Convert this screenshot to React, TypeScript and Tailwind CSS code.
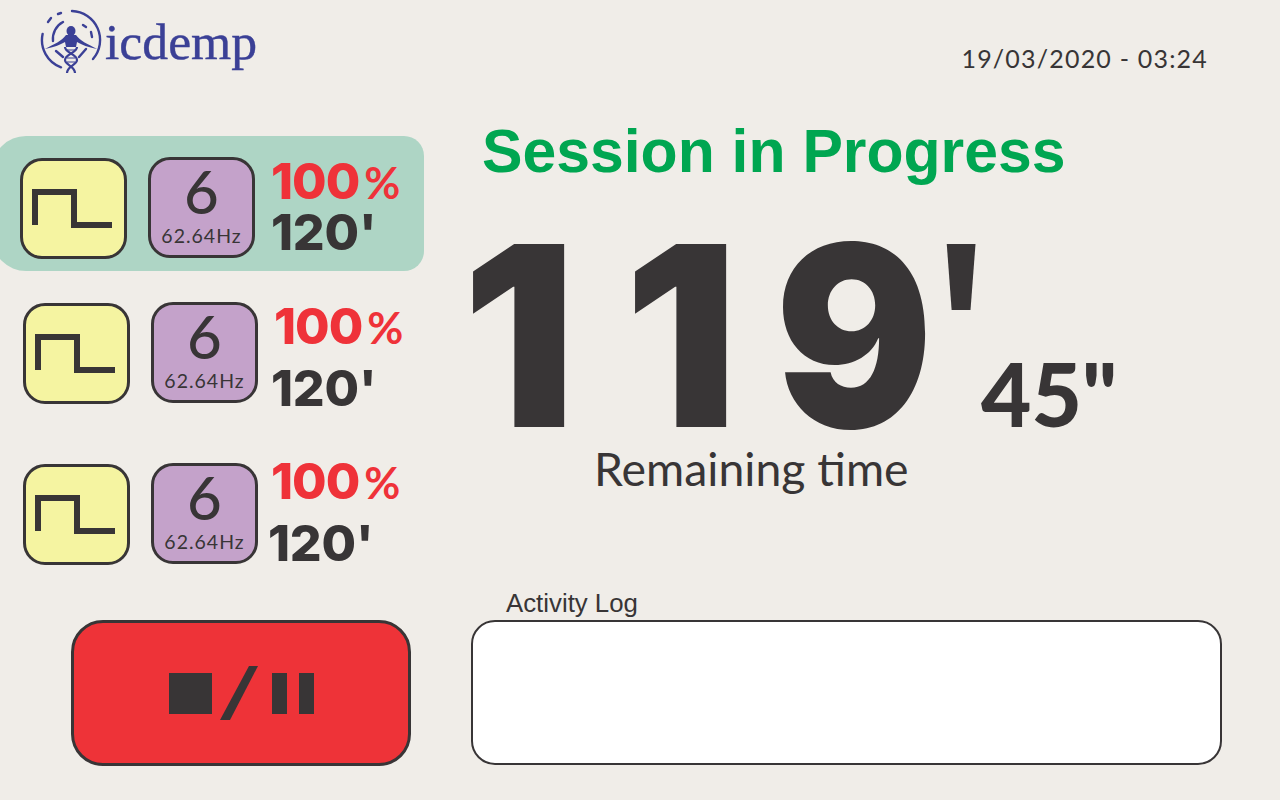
const ink = '#383536';
const indigo = '#3b4096';

function Logo() {
  return (
    <svg width="64" height="66" viewBox="0 0 64 66" fill="none" className="shrink-0">
      <g stroke={indigo} strokeLinecap="round" strokeWidth="2.4">
        <path d="M32 3 A29 29 0 0 1 53 51" />
        <path d="M2.6 26 A29 29 0 0 0 21 59.3" />
        <path d="M8 14 L11 10" />
        <path d="M18 6 L21 5" />
        <path d="M13 33 A19 19 0 0 1 23 14" />
        <path d="M43 17 L46 19" />
        <path d="M51 24 L52 29" />
        <path d="M16 43 L23 49" />
        <path d="M46 41 L39 49" />
      </g>
      <ellipse cx="31" cy="23" rx="4.5" ry="5" fill={indigo} />
      <path d="M5 41 C14 36 22 33 26 27 L36 27 C40 33 48 36 57 41 C48 39 42 37 37 34 L36 39 L26 39 L25 34 C20 37 14 39 5 41 Z" fill={indigo} />
      <g stroke={indigo} strokeWidth="2.2" fill="none">
        <path d="M25 39 C25 45 37 46 37 52 C37 57 27 58 27 65" />
        <path d="M37 39 C37 45 25 46 25 52 C25 57 35 58 35 65" />
      </g>
      <path d="M27 42 H35 M27 50 H35 M27 54 H35" stroke={indigo} strokeWidth="1" />
    </svg>
  );
}

function SquareWave() {
  return (
    <svg width="80" height="39" viewBox="0 0 80 39" fill="none" className="mr-[3px]">
      <path d="M3 36 V3 H42 V36 H80" stroke={ink} strokeWidth="6" />
    </svg>
  );
}

interface RowProps {
  rowClass: string;
  textClass: string;
  timeClass: string;
}

function ProgramRow({ rowClass, textClass, timeClass }: RowProps) {
  return (
    <div className={`flex items-start shrink-0 ${rowClass}`}>
      <div className="mt-px w-[107px] h-[101px] rounded-[22px] border-[3px] border-[#383536] bg-[#f5f4a1] flex items-center justify-center shrink-0">
        <SquareWave />
      </div>
      <div className="ml-[21px] w-[107px] h-[101px] rounded-[22px] border-[3px] border-[#383536] bg-[#c4a2ca] flex flex-col items-center shrink-0 text-[#383536] font-['Lato',sans-serif]">
        <span className="text-[60px] leading-[60px] mt-[1px] font-medium">6</span>
        <span className="text-[19.5px] leading-[22px] tracking-[1px] mt-[4px]">62.64Hz</span>
      </div>
      <div className={`flex flex-col items-start font-['Inter',sans-serif] font-extrabold ${textClass}`}>
        <div className="text-[#ef3239] text-[50px] leading-[40px] tracking-[-1px] flex items-baseline">
          100<span className="ml-[5px] text-[44px] leading-[40px] tracking-normal font-bold font-['Lato',sans-serif]">%</span>
        </div>
        <div className={`text-[#383536] text-[50px] leading-[40px] tracking-[-0.2px] ${timeClass}`}>120'</div>
      </div>
    </div>
  );
}

export default function App() {
  return (
    <div className="w-[1280px] h-[800px] bg-[#f0ede8] overflow-hidden flex flex-col">
      <header className="h-[136px] flex items-start justify-between shrink-0">
        <div className="flex items-start pl-[40px] pt-[8px]">
          <Logo />
          <span className="ml-[1px] mt-[4px] font-['Liberation_Serif',serif] text-[51.7px] leading-[60px] text-[#3b4096] [-webkit-text-stroke:0.4px_#3b4096]">icdemp</span>
        </div>
        <div className="pt-[43px] pr-[72px] font-['Lato',sans-serif] text-[25px] leading-[30px] tracking-[1.2px] text-[#383536]">
          19/03/2020 - 03:24
        </div>
      </header>

      <main className="flex flex-1">
        <section className="w-[471px] shrink-0 flex flex-col">
          <ProgramRow
            rowClass="h-[135px] w-[432px] -ml-[8px] pl-[28px] pt-[21px] bg-[#aed5c5] rounded-l-[34px] rounded-r-[20px]"
            textClass="ml-[16px] mt-[4px]"
            timeClass="mt-[10px]"
          />
          <ProgramRow rowClass="h-[102px] mt-[31px] pl-[23px]" textClass="ml-[16px] mt-[4px]" timeClass="mt-[21px] -ml-[3px]" />
          <ProgramRow rowClass="h-[102px] mt-[59px] pl-[23px]" textClass="ml-[13px] -mt-[2px]" timeClass="mt-[21px] -ml-[3px]" />
          <div className="pl-[71px] mt-[55px]">
            <button className="w-[340px] h-[146px] rounded-[32px] border-[3px] border-[#383536] bg-[#ee3338] flex items-center justify-center">
              <svg width="145" height="54" viewBox="0 0 145 54" fill={ink}>
                <path d="M0 7 H43 V48 H0 Z" />
                <path d="M80 0 H89 L61 54 H51 Z" />
                <path d="M103 7 H118 V48 H103 Z" />
                <path d="M130 7 H145 V48 H130 Z" />
              </svg>
            </button>
          </div>
        </section>

        <section className="flex-1 flex flex-col">
          <h1 className="pl-[11px] font-['Liberation_Sans',sans-serif] font-bold text-[60.7px] leading-[30px] text-[#00a651]">
            Session in Progress
          </h1>
          <div className="h-[277px] pt-[55px] flex items-baseline text-[#383536] font-black">
            <span className="-ml-[9px] w-[162px] shrink-0 font-['Inter',sans-serif] text-[252px] leading-[213px]">1</span>
            <span className="w-[151px] shrink-0 font-['Inter',sans-serif] text-[252px] leading-[213px]">1</span>
            <span className="w-[155px] shrink-0 origin-left scale-x-[0.93] font-['Inter',sans-serif] text-[252px] leading-[213px]">9</span>
            <span className="w-[51px] shrink-0 font-['Open_Sans',sans-serif] font-semibold text-[256px] leading-[213px]">'</span>
            <span className="font-['Lato',sans-serif] text-[87px] leading-none">45"</span>
          </div>
          <p className="pl-[123px] font-['Lato',sans-serif] text-[46.4px] leading-[50px] text-[#383536]">Remaining time</p>
          <p className="pl-[35px] mt-[95px] font-['Liberation_Sans',sans-serif] text-[25.8px] leading-[30px] text-[#383536]">Activity Log</p>
          <div className="mt-[2px] w-[751px] h-[145px] bg-white rounded-[24px] border-2 border-[#383536]" />
        </section>
      </main>
    </div>
  );
}
